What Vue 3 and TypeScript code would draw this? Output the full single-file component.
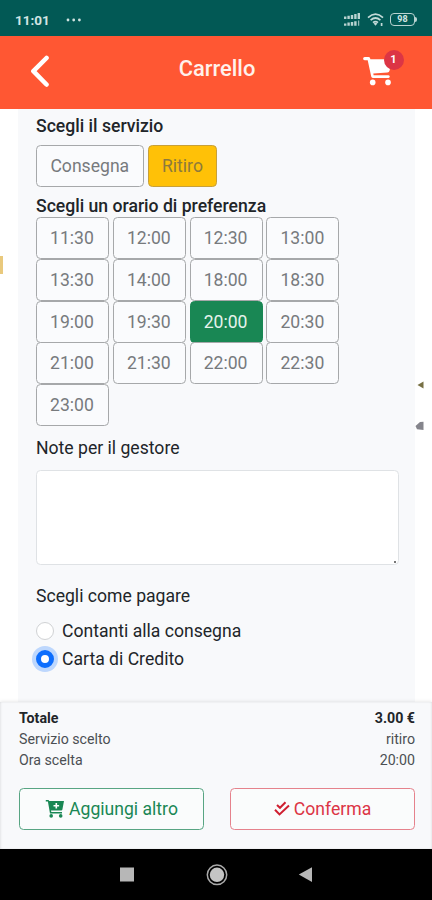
<script setup lang="ts">
import { ref } from 'vue'

type Service = 'Consegna' | 'Ritiro'

const services: Service[] = ['Consegna', 'Ritiro']
const times: string[] = [
  '11:30', '12:00', '12:30', '13:00',
  '13:30', '14:00', '18:00', '18:30',
  '19:00', '19:30', '20:00', '20:30',
  '21:00', '21:30', '22:00', '22:30',
  '23:00',
]
const payments: string[] = ['Contanti alla consegna', 'Carta di Credito']

const service = ref<Service>('Ritiro')
const time = ref('20:00')
const payment = ref('Carta di Credito')
const notes = ref('')
</script>

<template>
  <div class="screen">
    <div class="status">
      <span class="clock">11:01</span>
      <svg class="dots" width="16" height="4" viewBox="0 0 16 4" fill="#cfe3e0">
        <circle cx="2" cy="2" r="1.4" /><circle cx="7.7" cy="2" r="1.4" /><circle cx="13.4" cy="2" r="1.4" />
      </svg>
      <svg class="signal" width="17" height="14" viewBox="0 0 17 14" fill="#b9d3d1">
        <path d="M0 3.6h2.4v2.4H0zM3.4 2.8h2.4V6H3.4zM6.8 2h2.4v4H6.8zM10.2 1h2.4v5h-2.4zM13.6 0H16v6h-2.4z" />
        <path d="M0 10.4h2.4v2.4H0zM3.4 9.6h2.4v3.2H3.4zM6.8 9h2.4v3.8H6.8zM10.2 8.3h2.4v4.5h-2.4zM14.2 7.6h1v5.2h-1z" />
      </svg>
      <svg class="wifi" width="18" height="14" viewBox="0 0 18 14" fill="none" stroke="#c3dad8" stroke-width="1.7">
        <path d="M1 4.6Q8.5-2.2 16 4.6M3.6 7.2Q8.5 2.8 13.4 7.2M6 9.7Q8.5 7.4 11 9.7" />
        <path d="M8.5 12.8L6.6 10.6Q8.5 9 10.4 10.6Z" fill="#c3dad8" stroke="none" />
        <path d="M14.6 10v3" />
      </svg>
      <span class="battery"><span class="cell">98</span></span>
    </div>

    <header class="header">
      <svg class="back" width="20" height="33" viewBox="0 0 20 33" fill="none" stroke="#fff" stroke-width="4.6" stroke-linecap="round" stroke-linejoin="round">
        <path d="M16.5 3L3.4 16.2L16.5 29.5" />
      </svg>
      <h1>Carrello</h1>
      <div class="cart">
        <svg width="30" height="29" viewBox="0 0 30 29" fill="#fff">
          <path d="M1.7 0H5.5Q6.8 0 7.2 1.4L7.4 2.2H27.2Q29 2.3 28.6 4L26.6 13.5Q26.2 15.3 24.4 15.5L10.3 16.5L10.6 18.2H25.5Q26.8 18.4 26.8 19.6Q26.7 20.8 25.5 20.9H9.8Q8.5 20.8 8.2 19.5L4.7 3.3H1.7Q.1 3.1.1 1.7Q.1.2 1.7 0Z" />
          <circle cx="9.7" cy="25.4" r="2.8" /><circle cx="25" cy="25.4" r="2.8" />
        </svg>
        <span class="badge">1</span>
      </div>
    </header>

    <main class="content">
      <section class="panel">
        <h2>Scegli il servizio</h2>
        <div class="services">
          <button v-for="s in services" :key="s" type="button" class="choice" :class="{ amber: service === s }" @click="service = s">{{ s }}</button>
        </div>
        <h2 class="time-title">Scegli un orario di preferenza</h2>
        <div class="times">
          <button v-for="t in times" :key="t" type="button" class="choice" :class="{ green: time === t }" @click="time = t">{{ t }}</button>
        </div>
        <label class="label" for="notes">Note per il gestore</label>
        <div class="notes-box">
          <textarea id="notes" v-model="notes" class="notes"></textarea>
          <i class="grip"></i>
        </div>
        <p class="label pay-title">Scegli come pagare</p>
        <label v-for="p in payments" :key="p" class="radio">
          <input v-model="payment" type="radio" name="payment" :value="p" />
          <span>{{ p }}</span>
        </label>
      </section>
      <i class="scrap gold"></i>
      <svg class="scrap leaf" width="8" height="8" viewBox="0 0 8 8"><path d="M.5 4L6.5.5V7.5Z" fill="#777044" /></svg>
      <svg class="scrap stone" width="10" height="10" viewBox="0 0 10 10"><path d="M.5 5L5 1L8.5.8V9L2 8.2Z" fill="#85858c" /></svg>
    </main>

    <footer class="summary">
      <div class="row total"><span>Totale</span><span>3.00 €</span></div>
      <div class="row"><span>Servizio scelto</span><span>ritiro</span></div>
      <div class="row"><span>Ora scelta</span><span>20:00</span></div>
      <div class="actions">
        <button type="button" class="action add">
          <svg width="20" height="18" viewBox="0 0 20 18" fill="currentColor">
            <path fill-rule="evenodd" d="M.8 0H3.2Q4 0 4.2 1H19L17.4 9.4Q17.2 10.4 16.2 10.4H6L6.3 12H17V13.5H5L2.9 1.6H.8ZM10.5 3V5H8.5V6.6H10.5V8.6H12.1V6.6H14.1V5H12.1V3Z" />
            <circle cx="6.2" cy="15.9" r="1.8" /><circle cx="15.7" cy="15.9" r="1.8" />
          </svg>
          <span>Aggiungi altro</span>
        </button>
        <button type="button" class="action confirm">
          <svg width="16" height="16" viewBox="0 0 16 16" fill="none" stroke="currentColor" stroke-width="2">
            <path d="M3 4L6 6.8L11.5 1.2M1 8.8L5.5 13.4L15 4.5" />
          </svg>
          <span>Conferma</span>
        </button>
      </div>
    </footer>

    <nav class="system">
      <svg width="432" height="51" viewBox="0 0 432 51">
        <rect x="120" y="18.5" width="14" height="14" fill="#b7b7b7" />
        <circle cx="217" cy="25.8" r="9.7" fill="none" stroke="#aaa" stroke-width="1.5" />
        <circle cx="217" cy="25.8" r="7.2" fill="#c4c4c4" />
        <path d="M298.8 25.5L312 18.2V33Z" fill="#b7b7b7" />
      </svg>
    </nav>
  </div>
</template>

<style>
body {
  margin: 0;
  background: #fff;
}
</style>

<style scoped>
.screen {
  width: 432px;
  height: 900px;
  display: flex;
  flex-direction: column;
  overflow: hidden;
  font-family: Roboto, "Liberation Sans", sans-serif;
  color: #212529;
  background: #fff;
}
.screen * {
  box-sizing: border-box;
}
button {
  font-family: inherit;
  margin: 0;
}
.status {
  height: 36px;
  flex: none;
  display: flex;
  align-items: center;
  padding: 3px 15px 0;
  background: #025955;
}
.clock {
  font-size: 13.5px;
  font-weight: 700;
  color: #d3e5e3;
}
.dots {
  margin-left: 16px;
}
.signal {
  margin-left: auto;
}
.wifi {
  margin-left: 6px;
}
.battery {
  display: flex;
  align-items: center;
  margin-left: 5px;
}
.cell {
  width: 25px;
  height: 13px;
  border: 1.5px solid #b9d3d1;
  border-radius: 4px;
  color: #d3e5e3;
  font-size: 9px;
  font-weight: 700;
  line-height: 10px;
  text-align: center;
}
.battery::after {
  content: "";
  width: 2px;
  height: 5px;
  border-radius: 0 2px 2px 0;
  background: #b9d3d1;
}
.header {
  height: 73px;
  flex: none;
  display: grid;
  grid-template-columns: 72px 1fr 72px;
  padding-top: 1px;
  background: #ff5733;
}
.back {
  margin: 18px 0 0 30px;
}
h1 {
  margin: 17px 0 0 2px;
  font-size: 21.9px;
  line-height: 30px;
  font-weight: 500;
  text-align: center;
  color: #fff1eb;
}
.cart {
  position: relative;
  padding: 20px 0 0 3px;
}
.badge {
  position: absolute;
  left: 23.5px;
  top: 13px;
  width: 20px;
  height: 20px;
  border-radius: 50%;
  background: #dc3545;
  color: #fff;
  font-size: 11px;
  font-weight: 700;
  line-height: 20px;
  text-align: center;
}
.content {
  position: relative;
  height: 593px;
  flex: none;
  padding: 0 17px 0 18px;
}
.panel {
  height: 100%;
  padding: 5px 17px 0 18px;
  background: #f8f9fb;
}
h2 {
  margin: 0;
  font-size: 17.6px;
  font-weight: 500;
  line-height: 24px;
}
.services {
  display: flex;
  gap: 4px;
  margin-top: 7px;
}
.time-title {
  margin-top: 7px;
}
.times {
  display: grid;
  grid-template-columns: repeat(4, 73px);
  grid-auto-rows: 41.8px;
  column-gap: 3.8px;
  margin-top: -1px;
  margin-bottom: 0.5px;
}
.choice {
  height: 42px;
  padding: 0 13.4px;
  border: 1px solid #a6a8aa;
  border-radius: 4.5px;
  background: #fafbfd;
  color: #777a7d;
  font-size: 17.6px;
  line-height: 40px;
}
.times .choice {
  padding: 0 1px 0 0;
}
.amber {
  background: #ffc107;
  border-color: #c7a03a;
  color: #8d7a3d;
}
.green {
  background: #198754;
  border-color: #198754;
  color: #e5f3ec;
}
.label {
  display: block;
  margin: 10px 0 0;
  font-size: 17.6px;
  line-height: 24px;
}
.notes-box {
  position: relative;
  width: 363px;
  margin-top: 10px;
}
.notes {
  display: block;
  width: 100%;
  height: 95px;
  border: 1px solid #dfe2e5;
  border-radius: 4.5px;
  background: #fff;
  resize: none;
}
.grip {
  position: absolute;
  right: 3px;
  bottom: 2px;
  width: 2px;
  height: 2px;
  background: #777;
}
.pay-title {
  margin: 19px 0 9px;
}
.radio {
  display: flex;
  align-items: center;
  height: 28.6px;
  margin-top: -0.4px;
  font-size: 17.6px;
}
.radio input {
  appearance: none;
  width: 18px;
  height: 18px;
  margin: 0 8px 0 0;
  border: 1px solid #d0d2d4;
  border-radius: 50%;
  background: #fff;
}
.radio input:checked {
  border: 5px solid #0d6efd;
  box-shadow: 0 0 0 4px #bdd7fd;
}
.scrap {
  position: absolute;
}
.gold {
  left: 0;
  top: 147px;
  width: 3px;
  height: 18px;
  background: #e9c97d;
}
.leaf {
  left: 417px;
  top: 272px;
}
.stone {
  left: 415px;
  top: 312px;
}
.summary {
  height: 147px;
  flex: none;
  padding: 6px 17px 0 19px;
  background: #f8f9fb;
  box-shadow: 0 0 4px rgba(0, 0, 0, 0.13), inset 1px 0 2px rgba(0, 0, 0, 0.08), inset -1px 0 2px rgba(0, 0, 0, 0.06);
  position: relative;
}
.row {
  display: flex;
  justify-content: space-between;
  font-size: 14.2px;
  line-height: 21px;
  color: #4b4f53;
}
.total {
  font-weight: 700;
  color: #212529;
}
.actions {
  display: grid;
  grid-template-columns: 1fr 1fr;
  gap: 26px;
  margin-top: 17px;
}
.action {
  display: flex;
  align-items: center;
  justify-content: center;
  gap: 4px;
  height: 42px;
  padding: 0;
  border: 1px solid;
  border-radius: 4.5px;
  background: #fafcfc;
  font-size: 17.6px;
}
.add {
  color: #198754;
  border-color: #58a583;
}
.confirm {
  color: #dc3545;
  border-color: #e5828c;
}
.confirm svg {
  color: #cf1f30;
}
.system {
  height: 51px;
  flex: none;
  background: #000;
}
.system svg {
  display: block;
}
</style>
